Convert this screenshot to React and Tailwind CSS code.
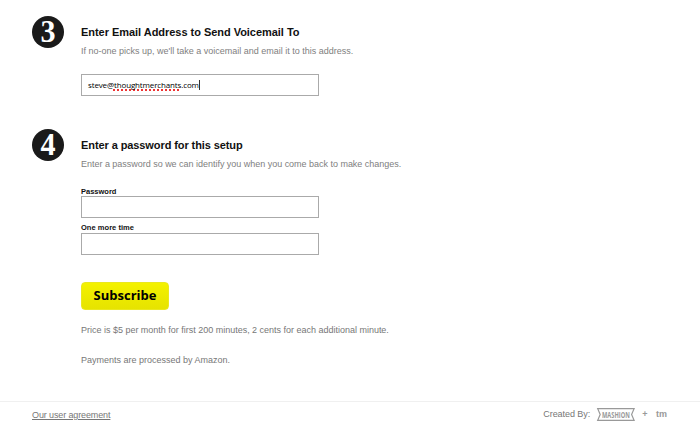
function StepNumber({ children }) {
  return (
    <div className="flex size-[31.5px] shrink-0 items-center justify-center rounded-full bg-[#1a1a1a] font-['Liberation_Serif',serif] text-[32px] leading-[31px] font-bold text-white">
      <span className="scale-x-[0.94]">{children}</span>
    </div>
  );
}

function Step({ number, title, titleClass, hint, hintClass, children }) {
  return (
    <section className="flex gap-[17.5px]">
      <StepNumber>{number}</StepNumber>
      <div className="pt-2 whitespace-nowrap">
        <h2 className={`text-[11px] leading-4 font-bold text-[#111] ${titleClass}`}>{title}</h2>
        <p className={`mt-[3px] text-[9px] leading-4 text-[#808080] ${hintClass}`}>{hint}</p>
        {children}
      </div>
    </section>
  );
}

const FIELD = "block h-[22px] w-[238px] border border-[#aaa] bg-white";

function MashionLogo() {
  return (
    <svg width="38" height="13" viewBox="0 0 38 13" className="block overflow-visible">
      <path d="M0.7 0.7H37.1L34.6 6.5L37.1 12.3H0.7L3.2 6.5Z" fill="none" stroke="#999" strokeWidth="1.2" />
      <text x="5" y="9.5" textLength="27.8" lengthAdjust="spacingAndGlyphs" fontSize="8.3" fontFamily="Open Sans, sans-serif" fontWeight="700" fill="#999">
        MASHION
      </text>
    </svg>
  );
}

export default function App() {
  return (
    <div className="h-[443px] w-[700px] overflow-hidden bg-white pt-4 font-['Liberation_Sans',Arial,sans-serif]">
      <main className="h-[385px] pl-8">
        <div className="h-[113px]">
          <Step
            number="3"
            title="Enter Email Address to Send Voicemail To"
            titleClass="tracking-[-0.035px]"
            hint="If no-one picks up, we'll take a voicemail and email it to this address."
            hintClass="tracking-[0px]"
          >
            <div className={`${FIELD} mt-[15px] flex items-center pl-[6px] font-['Open_Sans',sans-serif] text-[8px] leading-5 tracking-[-0.14px] text-black`}>
              <span>steve@</span>
              <span className="underline decoration-[#e33] decoration-dotted decoration-[1.5px] underline-offset-1 [text-decoration-skip-ink:none]">thoughtmerchants</span>
              <span>.com</span>
              <span className="h-[10px] w-px bg-[#333]" />
            </div>
          </Step>
        </div>
        <Step
          number="4"
          title="Enter a password for this setup"
          titleClass="tracking-[-0.09px]"
          hint="Enter a password so we can identify you when you come back to make changes."
          hintClass="tracking-[-0.02px]"
        >
          <form className="mt-[15px]">
            <label className="block h-[9px] text-[7.5px] leading-[9px] font-bold text-[#111]">Password</label>
            <input type="password" className={FIELD} />
            <label className="mt-[5px] block h-[10px] text-[7.5px] leading-[9px] font-bold tracking-[0.04px] text-[#111]">One more time</label>
            <input type="password" className={FIELD} />
            <button
              type="button"
              className="mt-[27px] block h-7 w-[88px] rounded-[4px] border border-[#eae820] bg-linear-to-b from-[#f4f200] to-[#e6e300] pb-[2px] font-['Open_Sans',sans-serif] text-[13px] leading-[24px] font-bold text-black"
            >
              Subscribe
            </button>
          </form>
          <p className="mt-[12px] text-[9px] leading-4 tracking-[-0.01px] text-[#777]">Price is $5 per month for first 200 minutes, 2 cents for each additional minute.</p>
          <p className="mt-[14px] text-[9px] leading-4 text-[#777]">Payments are processed by Amazon.</p>
        </Step>
      </main>
      <footer className="flex h-[42px] items-start justify-between border-t border-[#f0f0f0] pt-[5px] pr-[33px] pl-8 text-[9px] leading-4 text-[#777]">
        <a href="#agreement" className="tracking-[-0.12px] underline underline-offset-1">Our user agreement</a>
        <div className="-mt-px flex h-4 items-center">
          <span className="tracking-[-0.05px]">Created By:</span>
          <span className="ml-[7px]"><MashionLogo /></span>
          <span className="ml-[7px] font-bold text-[#999]">+</span>
          <span className="ml-[8.5px] font-bold text-[#999]">tm</span>
        </div>
      </footer>
    </div>
  );
}
